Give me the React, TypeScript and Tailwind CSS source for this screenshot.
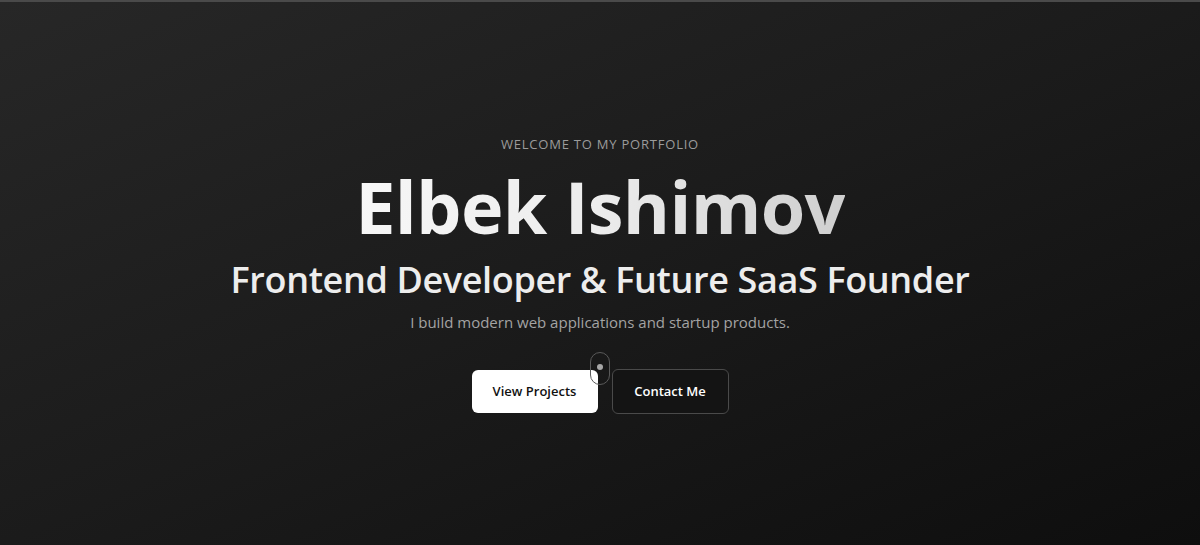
export default function App() {
  return (
    <main
      className="relative flex min-h-screen w-full flex-col items-center justify-center border-t-2 border-[#4a4a4a] bg-gradient-to-br from-[#272727] via-[#1b1b1b] to-[#0e0e0e] text-white"
      style={{ fontFamily: '"Open Sans", "Noto Sans", sans-serif' }}
    >
      <section className="flex translate-y-[1px] flex-col items-center text-center">
        <p className="text-[13px] uppercase tracking-[0.06em] text-[#9b9b9b]">
          Welcome to my portfolio
        </p>

        <h1 className="mt-[13px] bg-gradient-to-r from-[#f7f7f7] via-[#ececec] to-[#cfcfcf] bg-clip-text text-[72px] font-bold leading-[1.1] tracking-[-0.01em] text-transparent">
          Elbek Ishimov
        </h1>

        <h2 className="mt-[10px] text-[36px] font-semibold leading-tight tracking-[-0.01em] text-[#ededed]">
          Frontend Developer &amp; Future SaaS Founder
        </h2>

        <p className="mt-[9px] text-[15px] text-[#a3a3a3]">
          I build modern web applications and startup products.
        </p>

        <div className="relative mt-[36px] flex items-center gap-[14px]">
          <button className="h-[43px] w-[126px] rounded-md bg-white text-[13px] font-semibold text-[#111]">
            View Projects
          </button>
          <button className="h-[45px] w-[117px] rounded-md border border-[#4a4a4a] bg-[#141414] text-[13px] font-semibold text-white">
            Contact Me
          </button>

          {/* scroll indicator */}
          <div className="absolute -top-[17px] left-1/2 flex h-[33px] w-[20px] -translate-x-1/2 justify-center rounded-full border-[1.5px] border-[#5a5a5a] pt-[11px]">
            <span className="h-[6px] w-[6px] rounded-full bg-[#a8a8a8]" />
          </div>
        </div>
      </section>
    </main>
  );
}
